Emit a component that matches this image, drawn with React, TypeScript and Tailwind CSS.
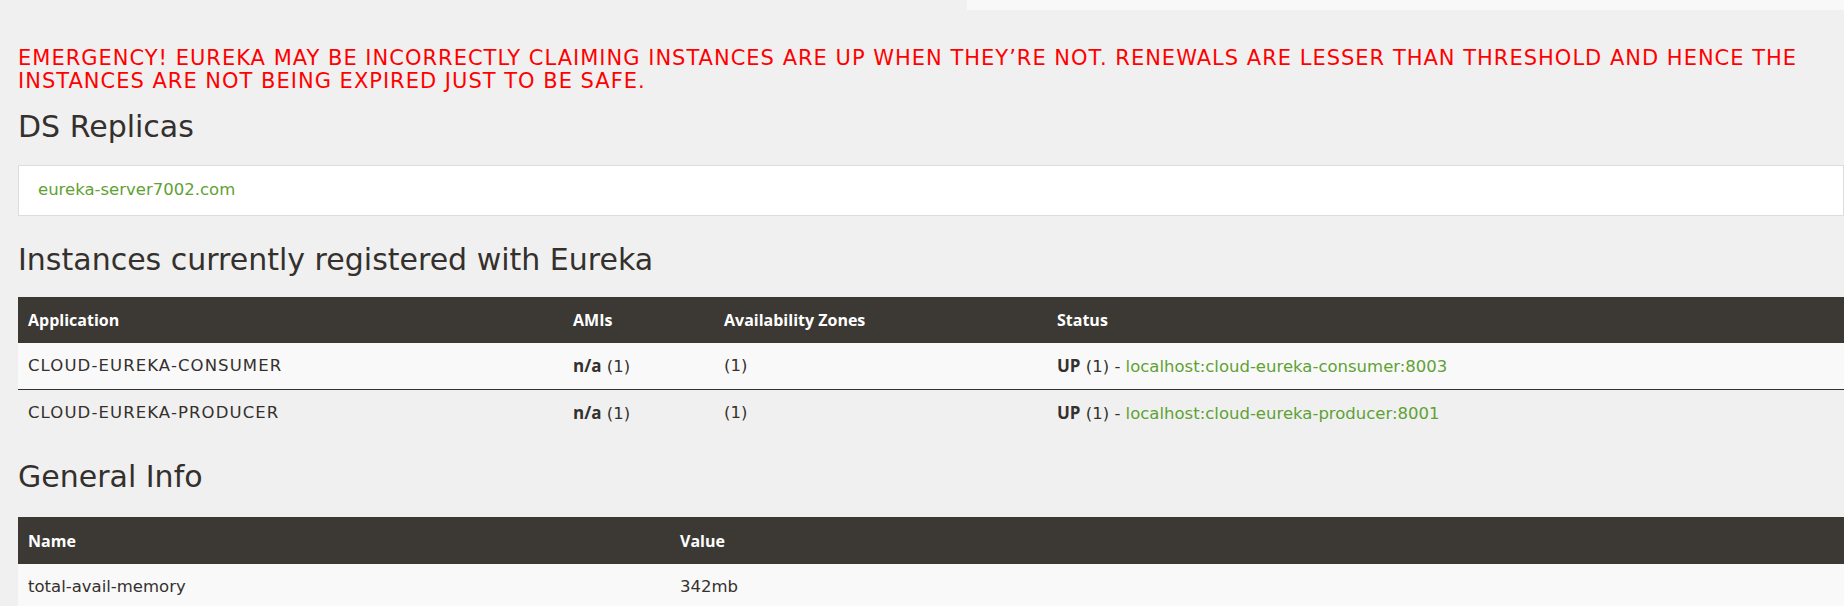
import React from 'react';

const instances = [
  { app: 'CLOUD-EUREKA-CONSUMER', host: 'localhost:cloud-eureka-consumer:8003', striped: true },
  { app: 'CLOUD-EUREKA-PRODUCER', host: 'localhost:cloud-eureka-producer:8001', striped: false },
];

const App: React.FC = () => {
  return (
    <div className="min-h-screen w-full overflow-hidden bg-[#f0f0f0] text-[#34302d] font-['DejaVu_Sans',sans-serif]">
      <div className="flex justify-end">
        <div className="h-[10px] w-[877px] bg-[#f8f8f8]"></div>
      </div>

      <div className="pl-[18px]">
        <h2 className="mt-[37px] whitespace-nowrap text-[21px] leading-[23px] tracking-[1px] text-[#ff0000]">
          EMERGENCY! EUREKA MAY BE INCORRECTLY CLAIMING INSTANCES ARE UP WHEN THEY’RE NOT. RENEWALS ARE LESSER THAN THRESHOLD AND HENCE THE
          <br />
          INSTANCES ARE NOT BEING EXPIRED JUST TO BE SAFE.
        </h2>

        <h1 className="mt-[16px] text-[30px] leading-[36px]">DS Replicas</h1>

        <div className="mt-[20px] flex h-[51px] items-center border border-[#dddddd] bg-white pl-[19px]">
          <span className="text-[16.5px] text-[#5fa134]">eureka-server7002.com</span>
        </div>

        <h1 className="mt-[26px] text-[30px] leading-[36px]">Instances currently registered with Eureka</h1>

        <div className="mt-[19px]">
          <div className="grid h-[46px] grid-cols-[545px_151px_333px_1fr] items-center bg-[#3c3935] font-['Open_Sans',sans-serif] text-[16px] font-bold text-white">
            <div className="pl-[10px]">Application</div>
            <div className="pl-[10px]">AMIs</div>
            <div className="pl-[10px]">Availability Zones</div>
            <div className="pl-[10px]">Status</div>
          </div>
          {instances.map((row) => (
            <div
              key={row.app}
              className={`grid h-[47px] grid-cols-[545px_151px_333px_1fr] items-center text-[16.5px] ${
                row.striped ? 'border-b-[1.5px] border-[#34302d] bg-[#f9f9f9]' : ''
              }`}
            >
              <div className="pl-[10px] tracking-[1.1px]">{row.app}</div>
              <div className="pl-[10px]">
                <b className="font-['Open_Sans',sans-serif] text-[17px]">n/a</b> (1)
              </div>
              <div className="pl-[10px]">(1)</div>
              <div className="pl-[10px]">
                <b className="font-['Open_Sans',sans-serif] text-[17px]">UP</b> (1) -{' '}
                <span className="text-[#5fa134]">{row.host}</span>
              </div>
            </div>
          ))}
        </div>

        <h1 className="mt-[22px] text-[30px] leading-[36px]">General Info</h1>

        <div className="mt-[22px]">
          <div className="grid h-[47px] grid-cols-[652px_1fr] items-center bg-[#3c3935] font-['Open_Sans',sans-serif] text-[16px] font-bold text-white">
            <div className="pl-[10px]">Name</div>
            <div className="pl-[10px]">Value</div>
          </div>
          <div className="grid h-[46px] grid-cols-[652px_1fr] items-center bg-[#f9f9f9] text-[16.5px]">
            <div className="pl-[10px]">total-avail-memory</div>
            <div className="pl-[10px]">342mb</div>
          </div>
        </div>
      </div>
    </div>
  );
};

export default App;
